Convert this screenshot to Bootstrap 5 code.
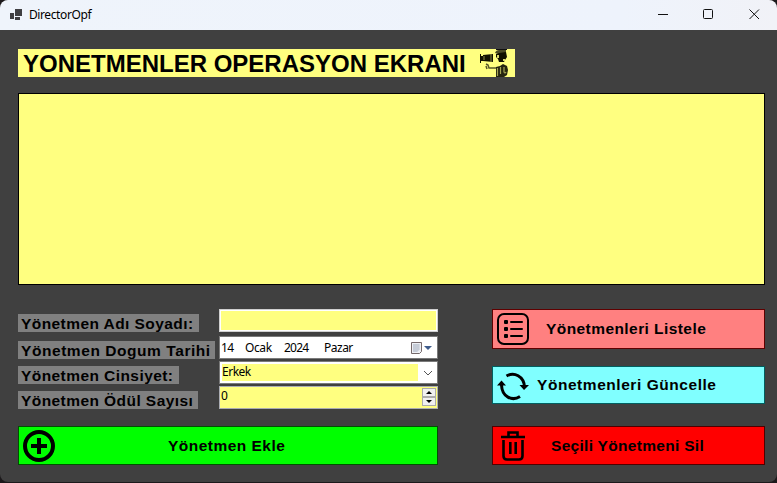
<!DOCTYPE html>
<html lang="tr">
<head>
<meta charset="utf-8">
<meta name="viewport" content="width=device-width, initial-scale=1">
<title>DirectorOpf</title>
<link href="https://cdn.jsdelivr.net/npm/bootstrap@5.3.0/dist/css/bootstrap.min.css" rel="stylesheet">
<style>
body{width:777px;height:483px;background:#1c191b;font-family:"Liberation Sans",Arial,sans-serif;color:#000}
svg{display:block;flex:none}
.app-window{width:777px;height:482px;background:#404040;border-radius:8px;overflow:hidden}
.title-bar{height:30px;background:linear-gradient(90deg,#eff4fb,#eef3fc 80%,#f1f2f7);padding-left:10px;padding-right:16px}
.ui-text{font-family:"Noto Sans","Segoe UI",sans-serif;font-size:12px;line-height:16px;white-space:pre}
.app-name{margin-left:7px;letter-spacing:-.4px}
.client{padding:19px 12px 0 18px}
.heading{width:497px;height:28px;background:#ffff80;font-size:24px;line-height:30px;font-weight:700;padding:0 4px 0 5px;margin:0 0 16px}
.data-panel{height:192px;background:#ffff80;border:1px solid #000;margin-bottom:24px}
.left-col{width:420px}
.right-col{width:273px}
.field-row{height:23px;margin-bottom:2px}
.field-label{height:18px;line-height:19px;background:#808080;padding-left:3px;margin-top:5px;white-space:nowrap}
.bold-text{font-size:15.5px;font-weight:700;letter-spacing:.43px}
.field{width:219px;height:23px;border:1px solid #7a7a7a;background:#fff}
.w1{width:181px}.w2{width:197px;letter-spacing:.56px}.w3{width:161px}.w4{width:180px}
.name-input{border-color:#d0d0d0;padding:1px}
.name-input input{width:100%;height:19px;border:0;border-radius:0;background:#ffff80;outline:0;padding:0}
.combo-value{width:196px;height:17px;background:#ffff80;margin-left:2px;line-height:15px;letter-spacing:-.5px}
.spin{width:14px;height:9px;border:1px solid #acacac;background:#f0f0f0}
.num-field{background:#ffff80;border-color:#abadb3}
.act{border:1px solid;border-radius:0;padding:0;color:#000;line-height:1;white-space:nowrap;width:100%}
.act-list{height:40px;background:#ff8080;border-color:#600000;margin-bottom:17px}
.act-sync{height:38px;background:#80ffff;border-color:#006060;margin-bottom:22px;letter-spacing:.55px}
.act-del{height:39px;background:#f00;border-color:#500000;letter-spacing:.3px}
.act-add{height:39px;background:#0f0;border-color:#005000;margin-top:17px;letter-spacing:.48px}
.date-day{margin-left:1px;width:24px;letter-spacing:-.7px}
.date-month{width:39px;letter-spacing:-.4px}
.date-year{width:40px;letter-spacing:-.8px}
.date-week{letter-spacing:-.5px}
.date-field .ui-text{margin-top:1px}
.num-text{margin-left:1px;margin-top:1px}
.spinner-box{margin:1px 1px 0 0}
.cap-add{margin-left:113px}
.cap-list{margin-left:17px}
.cap-sync{margin-left:8px}
.cap-del{margin-left:22px}
</style>
</head>
<body class="m-0 overflow-hidden">
<div class="app-window">
  <header class="title-bar d-flex align-items-center">
    <svg width="12" height="12" viewBox="0 0 12 12" fill="#3f3f42"><path d="M5 0h7v7H5zM0 4h4v6H0zM5 8h5v3H5z"/></svg>
    <span class="ui-text app-name">DirectorOpf</span>
    <svg class="ms-auto" width="103" height="12" viewBox="0 0 103 12" fill="none" stroke="#111" stroke-width="1"><path d="M0 5.500h10"/><rect x="45.500" y=".5" width="9" height="9" rx="1"/><path d="M91.500 .5l9.500 9.500M101 .5L91.500 10"/></svg>
  </header>
  <main class="client">
    <h1 class="heading d-flex justify-content-between"><span class="text-nowrap">YONETMENLER OPERASYON EKRANI</span>
      <svg width="32" height="28" viewBox="0 0 32 28"><path d="M1 5h1v2h2v-1l10-1v8L4 12H2v2H1z" fill="#111100"/><path d="M5 7v4M12 5v8" stroke="#8a8a45"/><path d="M16 4q1-3 4-3h7v3q-5 2-11 0z" fill="#4b4b25"/><path d="M17 0h11v1H17z" fill="#111"/><path d="M17 5l3-1 7-1 1 5-2 3-1 2h-5l-1-3-2-2z" fill="#111100"/><path d="M18 6h2v3h-2zM24 10h2v2h-2z" fill="#d9d96d"/><path d="M7 15l2 1 1 3h7M7 17l1 3" fill="none" stroke="#55552a" stroke-width="1.500"/><path d="M17 18l4-1 3-2 4 2 1 4-1 5-3 2h-8z" fill="#24240f"/><path d="M18.500 19v8M21.500 18v7M25 18v5q1 2 2 0" fill="none" stroke="#a5a553" stroke-width="1.200"/></svg>
    </h1>
    <section class="data-panel"></section>
    <div class="d-flex justify-content-between align-items-start">
      <form class="left-col">
        <div class="field-row d-flex justify-content-between mb-1">
          <label class="field-label bold-text w1" for="fullName">Yönetmen Adı Soyadı:</label>
          <div class="field name-input"><input class="d-block" id="fullName" type="text"></div>
        </div>
        <div class="field-row d-flex justify-content-between">
          <label class="field-label bold-text w2">Yönetmen Dogum Tarihi</label>
          <div class="field date-field d-flex align-items-center">
            <span class="ui-text date-day">14</span><span class="ui-text date-month">Ocak</span><span class="ui-text date-year">2024</span><span class="ui-text date-week">Pazar</span>
            <svg class="ms-auto me-1" width="23" height="14" viewBox="0 0 23 14"><path d="M1.500 1.500h10v9l-2 2h-8z" fill="#eef0f5" stroke="#75696a"/><path d="M3 4h7M3 6h7M3 8h7M3 10h5M4 3v8M6 3v8M8 3v7" stroke="#a9b2c2" stroke-width=".7"/><path d="M14 5h8l-4 4z" fill="#3f5c8c"/></svg>
          </div>
        </div>
        <div class="field-row d-flex justify-content-between">
          <label class="field-label bold-text w3">Yönetmen Cinsiyet:</label>
          <div class="field d-flex align-items-center">
            <div class="combo-value ui-text">Erkek</div>
            <svg class="ms-auto me-1" width="10" height="6" viewBox="0 0 10 6" fill="none" stroke="#555"><path d="M1 1l4 4 4-4"/></svg>
          </div>
        </div>
        <div class="field-row d-flex justify-content-between mb-0">
          <label class="field-label bold-text w4">Yönetmen Ödül Sayısı</label>
          <div class="field num-field d-flex">
            <span class="ui-text num-text">0</span>
            <div class="ms-auto spinner-box d-flex flex-column">
              <div class="spin d-flex align-items-center justify-content-center"><svg width="6" height="3" viewBox="0 0 6 3"><path d="M0 3l3-3 3 3z"/></svg></div>
              <div class="spin d-flex align-items-center justify-content-center"><svg width="6" height="3" viewBox="0 0 6 3"><path d="M0 0l3 3 3-3z"/></svg></div>
            </div>
          </div>
        </div>
        <button type="button" class="btn act bold-text act-add d-flex align-items-center">
          <svg class="ms-1" width="32" height="32" viewBox="0 0 32 32" fill="none" stroke="#000"><circle cx="16" cy="16" r="14" stroke-width="4"/><path d="M16 8v16M8 16h16" stroke-width="4"/></svg>
          <span class="cap-add">Yönetmen Ekle</span>
        </button>
      </form>
      <div class="right-col">
        <button type="button" class="btn bold-text act act-list d-flex align-items-center">
          <svg class="ms-1" width="32" height="32" viewBox="0 0 32 32" fill="none" stroke="#000" stroke-width="2"><rect x="1" y="1" width="30" height="30" rx="6"/><path d="M14 9h11M14 16h11M14 23h11" stroke-linecap="round"/><g fill="#000" stroke="none"><rect x="7" y="7" width="4" height="4" rx="1"/><rect x="7" y="14" width="4" height="4" rx="1"/><rect x="7" y="21" width="4" height="4" rx="1"/></g></svg>
          <span class="cap-list">Yönetmenleri Listele</span>
        </button>
        <button type="button" class="btn bold-text act act-sync d-flex align-items-center">
          <svg class="ms-1 mt-1" width="32" height="32" viewBox="0 0 32 32" fill="none" stroke="#000" stroke-width="3"><path d="M9.500 5C17 .500 27 5 27.500 16M23 25.500C15 30.500 5 26 4.500 14"/><path d="M22.500 14H32l-5 5zM0 14.500h9L4.500 9.500z" fill="#000" stroke="none"/></svg>
          <span class="cap-sync">Yönetmenleri Güncelle</span>
        </button>
        <button type="button" class="btn bold-text act act-del d-flex align-items-center">
          <svg class="ms-1" width="32" height="32" viewBox="0 0 32 32" fill="none" stroke="#000" stroke-width="2.600"><path d="M4 7h24M11.500 7V2.500h9V7M6.500 10v16q0 3.500 3.500 3.500h12q3.500 0 3.500-3.500V10M13.300 12v12M18.700 12v12"/></svg>
          <span class="cap-del">Seçili Yönetmeni Sil</span>
        </button>
      </div>
    </div>
  </main>
</div>
<script src="https://cdn.jsdelivr.net/npm/bootstrap@5.3.0/dist/js/bootstrap.bundle.min.js"></script>
</body>
</html>
